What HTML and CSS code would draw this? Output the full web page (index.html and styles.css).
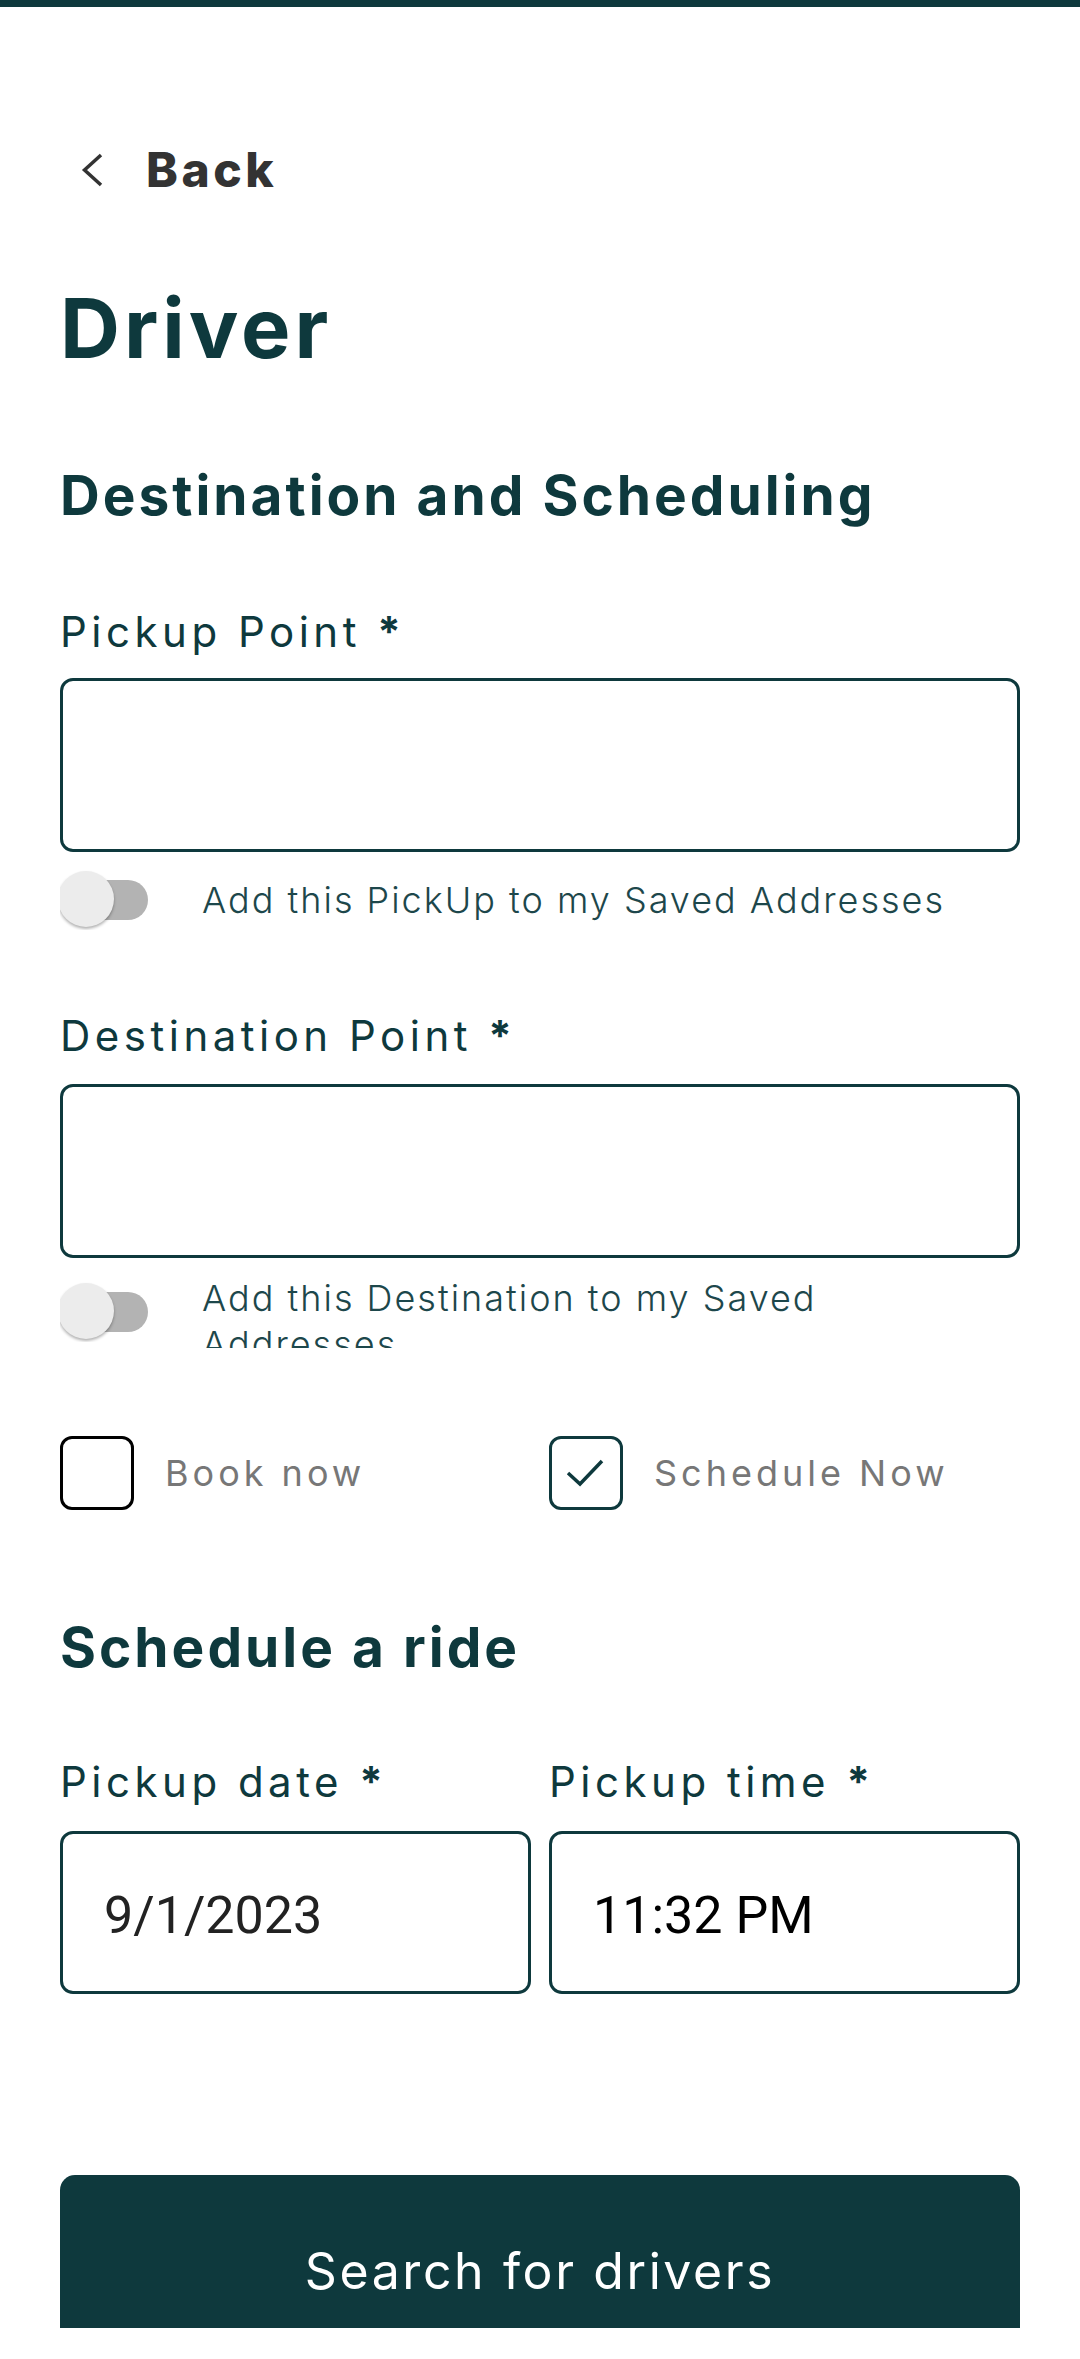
FILE: index.html
```html
<!DOCTYPE html>
<html lang="en">
<head>
<meta charset="utf-8">
<title>Driver</title>
<link rel="stylesheet" href="styles.css">
</head>
<body>
<div class="screen">
  <div class="topbar"></div>
  <main class="content">
    <a class="back" href="#">
      <svg class="back-icon" width="24" height="34" viewBox="0 0 24 34"><polyline points="20,2 3.5,17 20,32" fill="none" stroke="#333333" stroke-width="3.5"/></svg>
      <span class="back-text">Back</span>
    </a>

    <h1 class="title">Driver</h1>

    <h2 class="section section--first">Destination and Scheduling</h2>

    <label class="label label--pickup">Pickup Point <b class="req">*</b></label>
    <div class="input input--pickup"></div>

    <div class="toggle-row toggle-row--pickup">
      <span class="toggle"><span class="toggle-track"></span><span class="toggle-thumb"></span></span>
      <span class="toggle-text">Add this PickUp to my Saved Addresses</span>
    </div>

    <label class="label label--dest">Destination Point <b class="req">*</b></label>
    <div class="input input--dest"></div>

    <div class="toggle-row toggle-row--dest">
      <span class="toggle"><span class="toggle-track"></span><span class="toggle-thumb"></span></span>
      <span class="toggle-text toggle-text--top">Add this Destination to my Saved Addresses</span>
    </div>

    <div class="checks">
      <div class="check">
        <span class="check-box"></span>
        <span class="check-text">Book now</span>
      </div>
      <div class="check">
        <span class="check-box check-box--on">
          <svg class="check-mark" width="68" height="68" viewBox="0 0 68 68"><polyline points="16,34 28,45 50,22" fill="none" stroke="#0e393d" stroke-width="3.5"/></svg>
        </span>
        <span class="check-text">Schedule Now</span>
      </div>
    </div>

    <h2 class="section section--schedule">Schedule a ride</h2>

    <div class="pair pair--labels">
      <label class="label">Pickup date <b class="req">*</b></label>
      <label class="label">Pickup time <b class="req">*</b></label>
    </div>
    <div class="pair pair--values">
      <div class="value-box"><span class="value value--date">9/1/2023</span></div>
      <div class="value-box"><span class="value value--time">11:32 PM</span></div>
    </div>

    <button class="search" type="button">Search for drivers</button>
  </main>
</div>
</body>
</html>
```

FILE: styles.css
```css
* { box-sizing: border-box; }

html, body {
  margin: 0;
  padding: 0;
  background: #ffffff;
}

body {
  font-family: Inter, "Liberation Sans", sans-serif;
  color: #0e393d;
}

.screen {
  height: 2328px;
  overflow: hidden;
}

.topbar {
  height: 7px;
  background: #0e393d;
}

.content {
  padding: 0 60px;
  display: flex;
  flex-direction: column;
}

/* Back link */
.back {
  margin-top: 133px;
  height: 60px;
  display: flex;
  align-items: center;
  text-decoration: none;
  color: #333333;
}

.back-icon {
  margin-left: 21px;
  display: block;
}

.back-text {
  margin-left: 41px;
  font-size: 48px;
  line-height: 60px;
  font-weight: 800;
  letter-spacing: 3.5px;
}

.title {
  margin: 78px 0 0;
  font-size: 83px;
  line-height: 100px;
  font-weight: 700;
  color: #0e393d;
  letter-spacing: 4px;
}

.section {
  margin: 0;
  font-size: 55px;
  line-height: 66px;
  font-weight: 700;
  letter-spacing: 3px;
  color: #0e393d;
}

.section--first { margin-top: 84px; }
.section--schedule { margin-top: 104px; }

.label {
  display: block;
  font-size: 42px;
  line-height: 50px;
  font-weight: 400;
  letter-spacing: 4.5px;
  color: #0e393d;
}

.req {
  font-weight: 700;
}

.label--pickup { margin-top: 79px; }
.label--dest { margin-top: 75px; }

.input {
  height: 174px;
  border: 3px solid #0e393d;
  border-radius: 13px;
}

.input--pickup { margin-top: 21px; }
.input--dest { margin-top: 23px; }

/* Toggle rows */
.toggle-row {
  display: flex;
  align-items: center;
  height: 72px;
  overflow: hidden;
}

.toggle-row--pickup { margin-top: 12px; }
.toggle-row--dest { margin-top: 17px; height: 73px; }

.toggle {
  position: relative;
  flex: 0 0 142px;
  height: 60px;
  overflow: hidden;
}

.toggle-track {
  position: absolute;
  left: 8px;
  top: 10px;
  width: 80px;
  height: 40px;
  border-radius: 20px;
  background: #b3b3b3;
}

.toggle-thumb {
  position: absolute;
  left: -2px;
  top: 1px;
  width: 56px;
  height: 56px;
  border-radius: 50%;
  background: #ececec;
  box-shadow: 0 2px 3px rgba(0, 0, 0, 0.3);
}

.toggle-text {
  max-width: 760px;
  font-size: 36px;
  line-height: 46px;
  font-weight: 300;
  letter-spacing: 2px;
  color: #1d474b;
}

.toggle-text--top {
  align-self: flex-start;
}

/* Checkboxes */
.checks {
  margin-top: 88px;
  display: grid;
  grid-template-columns: 1fr 1fr;
  column-gap: 18px;
}

.check {
  display: flex;
  align-items: center;
}

.check-box {
  position: relative;
  flex: 0 0 74px;
  height: 74px;
  border: 3px solid #000000;
  border-radius: 12px;
}

.check-box--on {
  border-color: #0e393d;
}

.check-mark {
  position: absolute;
  left: 0;
  top: 0;
}

.check-text {
  margin-left: 31px;
  font-size: 36px;
  line-height: 46px;
  letter-spacing: 4px;
  color: #777777;
}

/* Date / time */
.pair {
  display: grid;
  grid-template-columns: 1fr 1fr;
  column-gap: 18px;
}

.pair--labels { margin-top: 77px; }
.pair--values { margin-top: 24px; }

.value-box {
  height: 163px;
  border: 3px solid #0e393d;
  border-radius: 13px;
  display: flex;
  align-items: center;
  padding: 6px 0 0 41px;
}

.value {
  font-family: Roboto, "Liberation Sans", sans-serif;
  font-size: 52px;
  line-height: 60px;
}

.value--date { color: #222222; }
.value--time { color: #000000; }

.search {
  margin-top: 181px;
  height: 192px;
  flex: 0 0 192px;
  width: 100%;
  border: 0;
  border-radius: 15px;
  background: #0e393d;
  color: #ffffff;
  font-family: Inter, "Liberation Sans", sans-serif;
  font-size: 50px;
  font-weight: 400;
  letter-spacing: 2.6px;
  padding: 0;
}
```
